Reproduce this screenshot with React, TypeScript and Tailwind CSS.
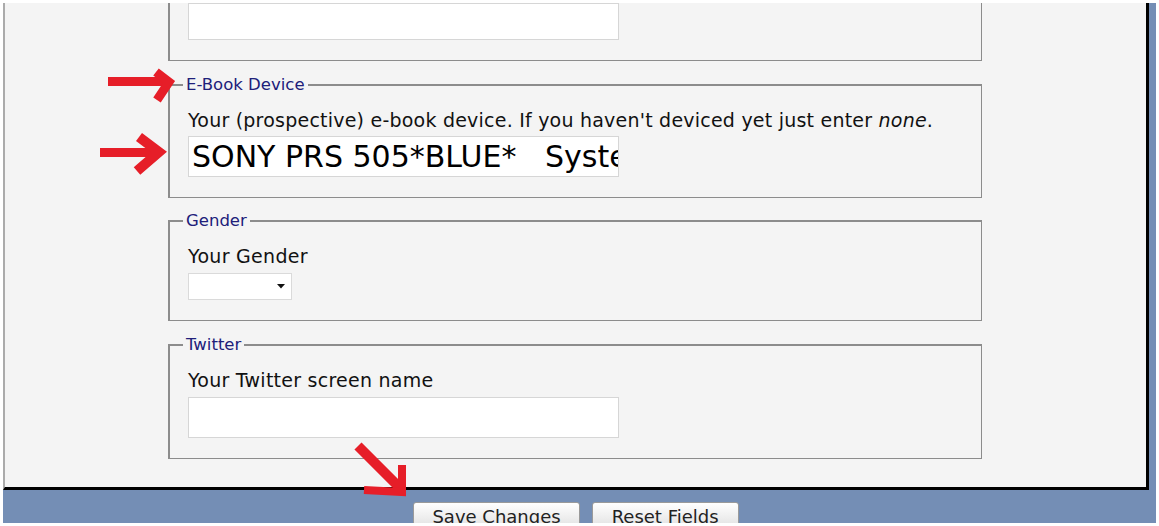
import React from "react"

const font = { fontFamily: '"DejaVu Sans", Verdana, sans-serif' }

function Legend({ children }: { children: React.ReactNode }) {
  return (
    <legend className="-ml-[5px] px-[3px] text-[16.5px] leading-[19px] text-[#20207a]">{children}</legend>
  )
}

function TextBox({ value = "", big = false }: { value?: string; big?: boolean }) {
  return (
    <input
      readOnly
      value={value}
      className={`block w-[431px] h-[41px] bg-white border border-[#d6d6d6] pl-[3px] text-black outline-none ${big ? "text-[30px]" : "text-[16px]"}`}
    />
  )
}

export default function App() {
  return (
    <div className="relative w-[1159px] h-[526px] bg-white pt-[3px] pl-[3px] overflow-hidden" style={font}>
      <div className="w-[1153px] h-[520px] bg-[#748eb5] overflow-hidden">
        {/* main form panel */}
        <div className="w-[1146px] h-[487px] bg-[#f4f4f4] border-l-2 border-l-[#ababab] border-r-[3px] border-b-[3px] border-r-black border-b-black overflow-hidden pl-[163px] text-[19px] text-[#111]">
          {/* tail of the previous fieldset */}
          <div className="w-[814px] h-[58px] border-l-2 border-r border-b border-[#8c8c8c] flex flex-col justify-end pl-[18px] pb-[20px]">
            <TextBox />
          </div>

          <fieldset className="mt-[14px] w-[814px] border-t-2 border-l-2 border-r border-b border-[#8c8c8c] pl-[18px] pt-[15px] pb-[20px]">
            <Legend>E-Book Device</Legend>
            <div className="leading-[22px] tracking-[0.22px]">
              Your (prospective) e-book device. If you haven't deviced yet just enter <i>none</i>.
            </div>
            <div className="mt-[5px]">
              <TextBox big value="SONY PRS 505*BLUE*   System Software Version 1.0" />
            </div>
          </fieldset>

          <fieldset className="mt-[13px] w-[814px] border-t-2 border-l-2 border-r border-b border-[#8c8c8c] pl-[18px] pt-[15px] pb-[20px]">
            <Legend>Gender</Legend>
            <div className="leading-[22px] tracking-[0.3px]">Your Gender</div>
            <div className="mt-[6px] w-[104px] h-[27px] bg-white border border-[#dadada] flex items-center justify-end pr-[6px]">
              <svg width="8" height="5" viewBox="0 0 8 5">
                <path d="M0 0 H8 L4 4.5 Z" fill="#111" />
              </svg>
            </div>
          </fieldset>

          <fieldset className="mt-[14px] w-[814px] border-t-2 border-l-2 border-r border-b border-[#8c8c8c] pl-[18px] pt-[15px] pb-[20px]">
            <Legend>Twitter</Legend>
            <div className="leading-[22px] tracking-[0.25px]">Your Twitter screen name</div>
            <div className="mt-[6px]">
              <TextBox />
            </div>
          </fieldset>
        </div>

        {/* buttons */}
        <div className="w-[1146px] flex justify-center gap-[12px] pt-[12px]">
          <button className="h-[28px] px-[18px] pt-[3px] leading-[21px] text-[18px] text-[#222] border border-[#9a9a9a] rounded-[3px] bg-linear-to-b from-white to-[#e0e0e0] flex items-start">
            Save Changes
          </button>
          <button className="h-[28px] px-[19px] pt-[3px] leading-[21px] text-[18px] text-[#222] border border-[#9a9a9a] rounded-[3px] bg-linear-to-b from-white to-[#e0e0e0] flex items-start">
            Reset Fields
          </button>
        </div>
      </div>

      {/* hand drawn red arrows over the screenshot */}
      <svg className="absolute inset-0 pointer-events-none" width="1159" height="526" viewBox="0 0 1159 526">
        <g stroke="#e61e28" fill="none" strokeLinejoin="miter" strokeLinecap="butt">
          <line x1="108" y1="81.5" x2="164" y2="81.5" strokeWidth="9" />
          <polyline points="156,72 169,82 157,100" strokeWidth="9" />
          <line x1="100" y1="152.5" x2="158" y2="152.5" strokeWidth="9" />
          <polyline points="139,137 159,152 137,171" strokeWidth="10" />
          <line x1="358" y1="446" x2="400" y2="488" strokeWidth="10" />
          <polyline points="402,465 402,492 364,490" strokeWidth="8" />
        </g>
      </svg>
    </div>
  )
}
